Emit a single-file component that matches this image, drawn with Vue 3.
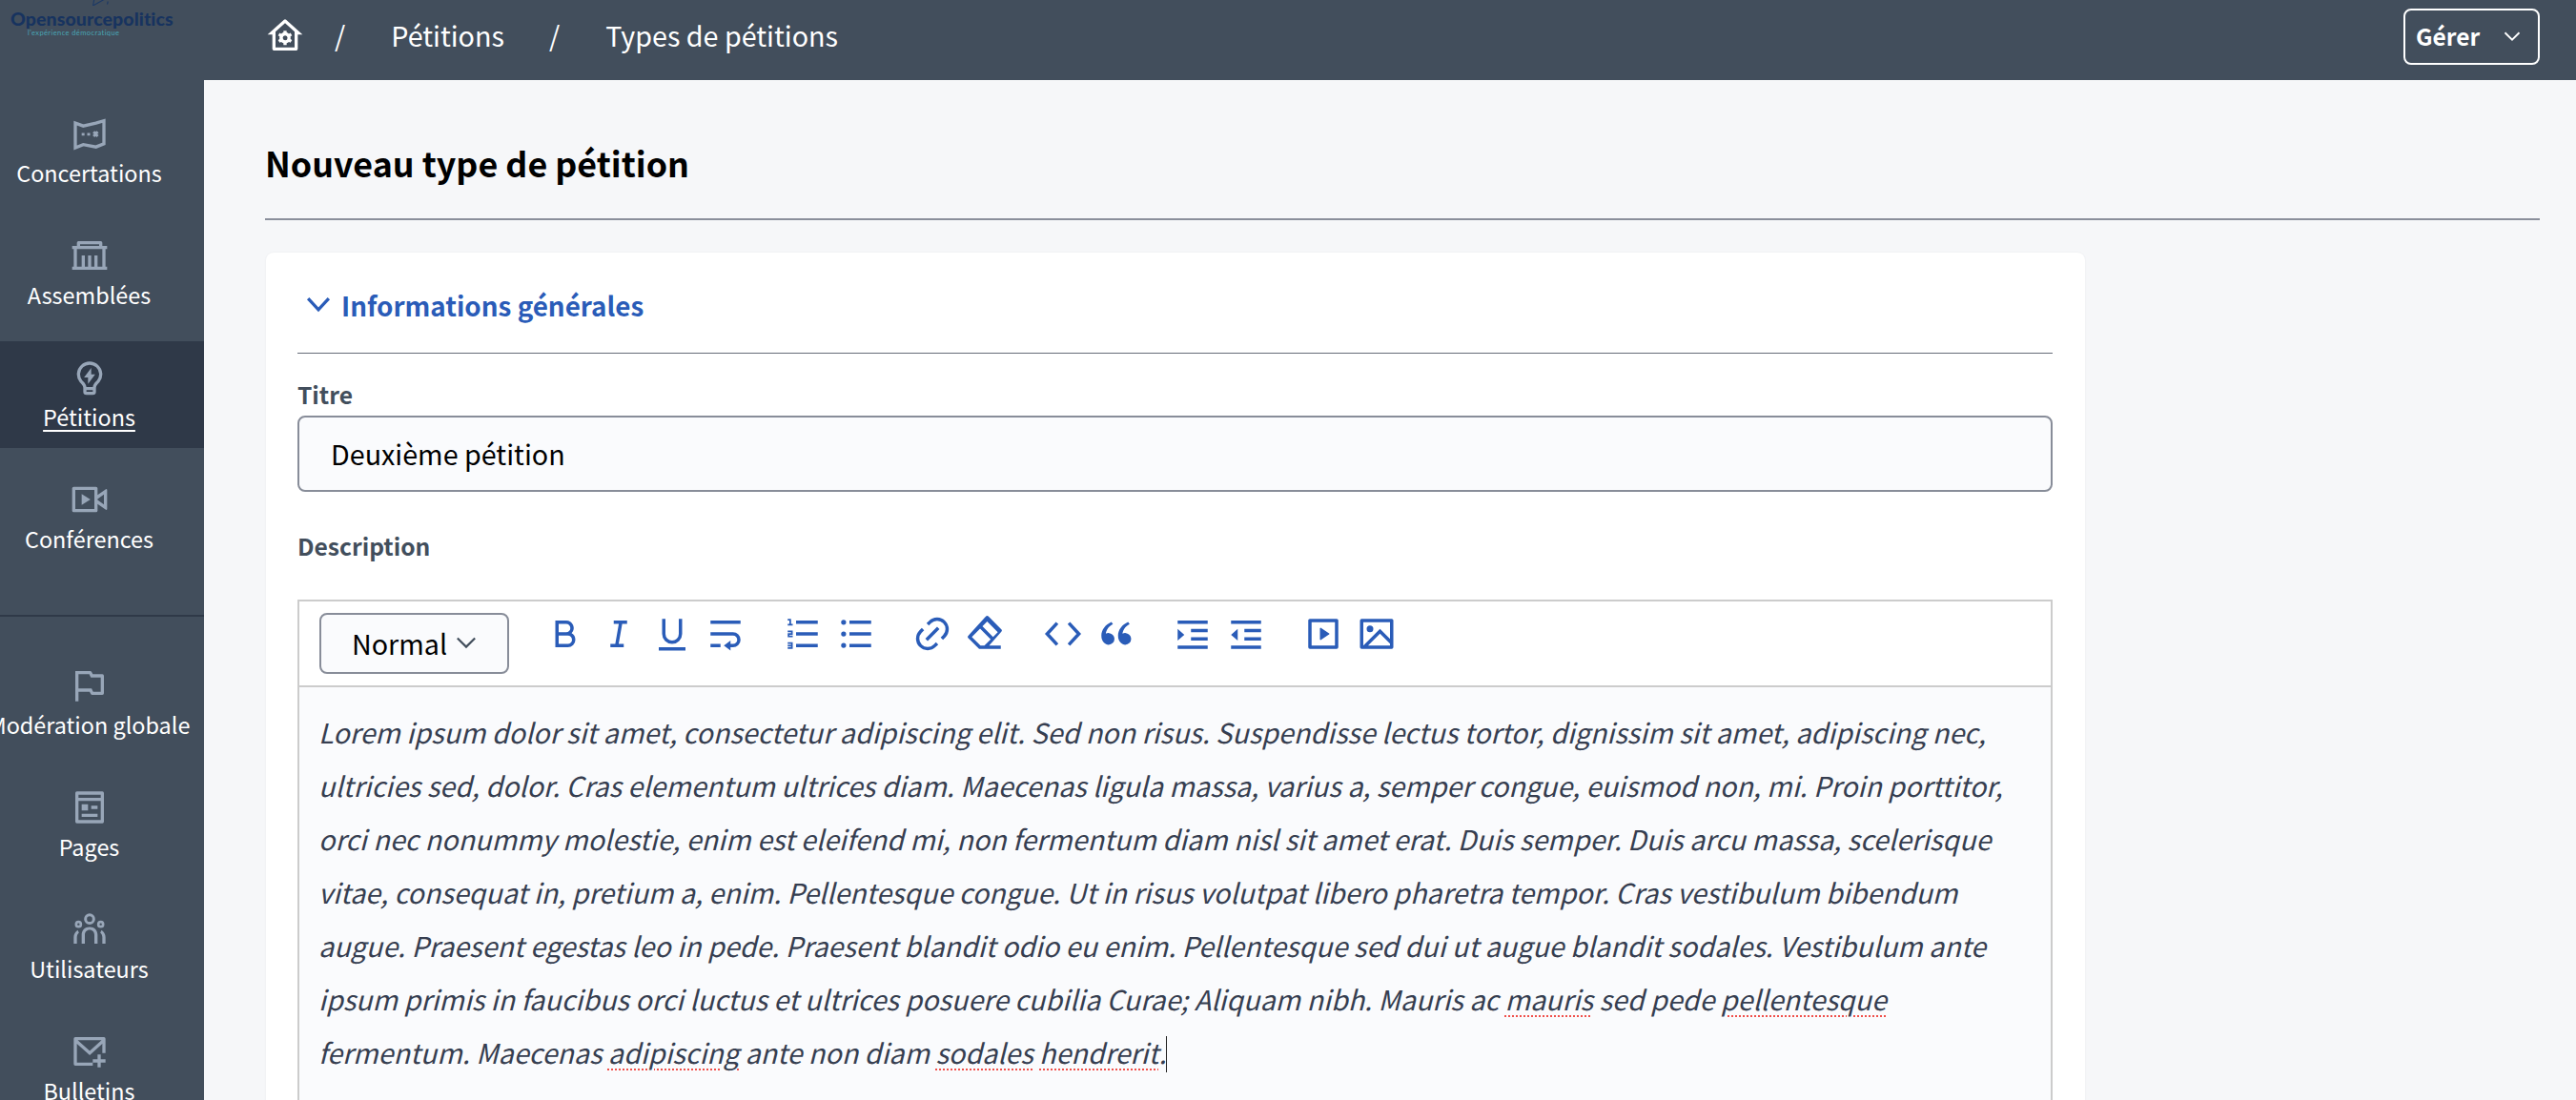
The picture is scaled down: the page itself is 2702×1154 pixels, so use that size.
<script setup>
const navTop = [
  { label: 'Concertations', paths: ['M3 5.500l5 1.800 8-1.800 5-1.500v14.500l-5 2-8-1.500-5 2z'], stroke: true, extra: 'M7 12.500h1.800M10.500 12.500h1.800M14.500 11l2.600 2.800M17.100 11l-2.600 2.800' },
  { label: 'Assemblées', paths: ['M20 6h3v2h-1v11h1v2H1v-2h1V8H1V6h3V4a1 1 0 0 1 1-1h14a1 1 0 0 1 1 1v2zm0 2H4v11h3v-7h2v7h2v-7h2v7h2v-7h2v7h3V8zM6 5v1h12V5H6z'] },
  { label: 'Pétitions', active: true, paths: ['M9.973 18h4.054c.132-1.202.745-2.194 1.740-3.277.113-.122.832-.867.917-.973a6 6 0 1 0-9.370-.002c.086.107.807.853.918.974.996 1.084 1.609 2.076 1.741 3.278zM14 20h-4v1h4v-1zm-8.246-5a8 8 0 1 1 12.490.002C17.624 15.774 16 17 16 18.500V21a2 2 0 0 1-2 2h-4a2 2 0 0 1-2-2v-2.500C8 17 6.375 15.774 5.754 15zM13 10.004h2.500l-4.500 6v-4H8.500L13 6v4.004z'] },
  { label: 'Conférences', paths: ['M17 9.200l5.213-3.650a.5.5 0 0 1 .787.41v12.080a.5.5 0 0 1-.787.41L17 14.800V19a1 1 0 0 1-1 1H2a1 1 0 0 1-1-1V5a1 1 0 0 1 1-1h14a1 1 0 0 1 1 1v4.200zm0 3.159l4 2.800V8.840l-4 2.800v.718zM3 6v12h12V6H3zm4 2.500l5.500 3.500L7 15.500z'] }
]
const navBottom = [
  { label: 'Modération globale', paths: ['M3 3h9.382a1 1 0 0 1 .894.553L14 5h6a1 1 0 0 1 1 1v11a1 1 0 0 1-1 1h-6.382a1 1 0 0 1-.894-.553L12 16H5v6H3V3zm2 2v9h8.236l1 2H19V7h-6.236l-1-2H5z'] },
  { label: 'Pages', paths: ['M5 8v12h14V8H5zm0-2h14V4H5v2zm15 16H4a1 1 0 0 1-1-1V3a1 1 0 0 1 1-1h16a1 1 0 0 1 1 1v18a1 1 0 0 1-1 1zM7 10h4v4H7v-4zm0 6h10v2H7v-2zm6-5h4v2h-4v-2z'] },
  { label: 'Utilisateurs', paths: ['M12 2a3.500 3.500 0 1 1 0 7 3.500 3.500 0 0 1 0-7zm0 1.800a1.700 1.700 0 1 0 0 3.400 1.700 1.700 0 0 0 0-3.400zM5 6.500a2.300 2.300 0 1 1 0 4.600 2.300 2.300 0 0 1 0-4.600zm0 1.600a.7.7 0 1 0 0 1.400.7.7 0 0 0 0-1.400zM19 6.500a2.300 2.300 0 1 1 0 4.600 2.300 2.300 0 0 1 0-4.600zm0 1.600a.7.7 0 1 0 0 1.400.7.7 0 0 0 0-1.400zM12 10.500c3 0 5 2 5 5V21h-2v-5.500c0-1.800-1.200-3.200-3-3.200s-3 1.400-3 3.200V21H7v-5.500c0-3 2-5 5-5zM4.500 12.500l.8 1.600C4.500 14.800 4 15.800 4 17v4H2v-4c0-2 1-3.500 2.500-4.500zM19.500 12.500C21 13.500 22 15 22 17v4h-2v-4c0-1.200-.5-2.200-1.300-2.900z'] },
  { label: 'Bulletins', paths: ['M22 13h-2V7.238l-7.928 7.100L4 7.216V19h10v2H3a1 1 0 0 1-1-1V4a1 1 0 0 1 1-1h18a1 1 0 0 1 1 1v9zM4.511 5l7.550 6.662L19.502 5H4.511zM19 17h3v2h-3v3h-2v-3h-3v-2h3v-3h2v3z'] }
]
const toolGroups = [
  [{ d: 'M8 11h4.500a2.500 2.500 0 1 0 0-5H8v5zm10 4.500a4.500 4.500 0 0 1-4.500 4.500H6V4h6.500a4.500 4.500 0 0 1 3.256 7.606A4.498 4.498 0 0 1 18 15.500zM8 13v5h5.500a2.500 2.500 0 1 0 0-5H8z' },
   { d: 'M15 20H7v-2h2.927l2.116-12H9V4h8v2h-2.927l-2.116 12H15z' },
   { d: 'M8 3v9a4 4 0 1 0 8 0V3h2v9a6 6 0 1 1-12 0V3h2zM4 20h16v2H4v-2z' },
   { d: 'M15 18h1.500a2.500 2.500 0 1 0 0-5H3v-2h13.500a4.500 4.500 0 1 1 0 9H15v2l-4-3 4-3v2zM3 4h18v2H3V4zm6 14v2H3v-2h6z' }],
  [{ d: 'M8 4h13v2H8V4zM5 3v3h1v1H3V6h1V4H3V3h2zM3 14v-2.500h2V11H3v-1h3v2.500H4v.5h2v1H3zm2 5.500H3v-1h2V18H3v-1h3v4H3v-1h2v-.5zM8 11h13v2H8v-2zm0 7h13v2H8v-2z' },
   { d: 'M8 4h13v2H8V4zM4.500 6.500a1.500 1.500 0 1 1 0-3 1.500 1.500 0 0 1 0 3zm0 7a1.500 1.500 0 1 1 0-3 1.500 1.500 0 0 1 0 3zm0 6.900a1.500 1.500 0 1 1 0-3 1.500 1.500 0 0 1 0 3zM8 11h13v2H8v-2zm0 7h13v2H8v-2z' }],
  [{ d: 'M18.364 15.536L16.950 14.120l1.414-1.414a5 5 0 1 0-7.071-7.071L9.879 7.050 8.464 5.636 9.880 4.222a7 7 0 0 1 9.900 9.900l-1.415 1.414zm-2.828 2.828l-1.415 1.414a7 7 0 0 1-9.900-9.900l1.415-1.414L7.050 9.880l-1.414 1.414a5 5 0 1 0 7.071 7.071l1.414-1.414 1.415 1.414zm-.708-10.607l1.415 1.415-7.071 7.070-1.415-1.414 7.071-7.070z' },
   { d: 'M8.586 8.858l-4.950 4.950 5.194 5.194H10V19h1.172l3.778-3.778-6.364-6.364zM10 7.444l6.364 6.364 2.828-2.829-6.364-6.364L10 7.444zM14 19h7v2h-9l-3.998.002-6.487-6.487a1 1 0 0 1 0-1.414L12.120 1.494a1 1 0 0 1 1.415 0l7.778 7.778a1 1 0 0 1 0 1.414L14 19z' }],
  [{ d: 'M8.500 5.500L2.500 12l6 6.500M15.500 5.500l6 6.500-6 6.500', line: true },
   { d: 'M4.583 17.321C3.553 16.227 3 15 3 13.011c0-3.500 2.457-6.637 6.030-8.188l.893 1.378c-3.335 1.804-3.987 4.145-4.247 5.621.537-.278 1.240-.375 1.929-.311 1.804.167 3.226 1.648 3.226 3.489a3.500 3.500 0 0 1-3.500 3.500c-1.073 0-2.099-.49-2.748-1.179zm10 0C13.553 16.227 13 15 13 13.011c0-3.500 2.457-6.637 6.030-8.188l.893 1.378c-3.335 1.804-3.987 4.145-4.247 5.621.537-.278 1.240-.375 1.929-.311 1.804.167 3.226 1.648 3.226 3.489a3.500 3.500 0 0 1-3.500 3.500c-1.073 0-2.099-.49-2.748-1.179z' }],
  [{ d: 'M3 4h18v2H3V4zm0 15h18v2H3v-2zm8-5h10v2H11v-2zm0-5h10v2H11V9zm-4 3.500L3 16V9l4 3.500z' },
   { d: 'M3 4h18v2H3V4zm0 15h18v2H3v-2zm8-5h10v2H11v-2zm0-5h10v2H11V9zm-8 3.500L7 9v7l-4-3.500z' }],
  [{ d: 'M3 3.993C3 3.445 3.445 3 3.993 3h16.014c.548 0 .993.445.993.993v16.014a.994.994 0 0 1-.993.993H3.993A.994.994 0 0 1 3 20.007V3.993zM5 5v14h14V5H5zm5.622 3.415l4.879 3.252a.4.4 0 0 1 0 .666l-4.880 3.252a.4.4 0 0 1-.621-.332V8.747a.4.4 0 0 1 .622-.332z' },
   { d: 'M4.828 21l-.02.02-.021-.02H2.992A.993.993 0 0 1 2 20.007V3.993A1 1 0 0 1 2.992 3h18.016c.548 0 .992.445.992.993v16.014a1 1 0 0 1-.992.993H4.828zM20 15V5H4v14L14 9l6 6zm0 2.828l-6-6L6.828 19H20v-1.172zM8 11a2 2 0 1 1 0-4 2 2 0 0 1 0 4z' }]
]
</script>

<template>
  <div class="page">
    <header class="topbar">
      <div class="logo">
        <svg class="logo-mark" viewBox="0 0 24 8" fill="none" stroke="#1d3a66" stroke-width="1.500"><path d="M2 8L4 -2l14 1z" /><path d="M22 6l1-4" /></svg>
        <div class="logo-name">Opensourcepolitics</div>
        <div class="logo-tag">l'expérience démocratique</div>
      </div>
      <nav class="crumbs">
        <svg class="home" viewBox="0 0 24 24" fill="#fff"><path d="M19 21H5a1 1 0 0 1-1-1v-9H1l10.327-9.388a1 1 0 0 1 1.346 0L23 11h-3v9a1 1 0 0 1-1 1zM6 19h12V9.157l-6-5.454-6 5.454V19zm2.591-5.191a3.508 3.508 0 0 1 0-1.622l-.991-.572 1-1.732.991.573a3.495 3.495 0 0 1 1.404-.812V8.500h2v1.144c.532.158 1.010.44 1.403.812l.992-.573 1 1.731-.991.573a3.508 3.508 0 0 1 0 1.622l.991.572-1 1.731-.991-.572a3.495 3.495 0 0 1-1.404.811v1.145h-2V16.350a3.495 3.495 0 0 1-1.404-.811l-.991.572-1-1.730.991-.573zm3.404.688a1.500 1.500 0 1 0 0-2.998 1.500 1.500 0 0 0 0 2.998z" /></svg>
        <span class="sep first">/</span>
        <span>Pétitions</span>
        <span class="sep">/</span>
        <span>Types de pétitions</span>
      </nav>
      <button class="manage">
        <span>Gérer</span>
        <svg viewBox="0 0 24 24" fill="none" stroke="#fff" stroke-width="2.200"><path d="M3 7.500l9 9 9-9" /></svg>
      </button>
    </header>

    <div class="body">
      <aside class="side">
        <div class="side-group first">
          <a v-for="item in navTop" :key="item.label" class="nav" :class="{ active: item.active }">
            <svg v-if="item.stroke" viewBox="0 0 24 24" fill="none" stroke="#98a6b8" stroke-width="2">
              <path v-for="p in item.paths" :key="p" :d="p" />
              <path :d="item.extra" stroke-width="1.700" />
            </svg>
            <svg v-else viewBox="0 0 24 24" fill="#98a6b8"><path v-for="p in item.paths" :key="p" :d="p" /></svg>
            <span class="nav-label">{{ item.label }}</span>
          </a>
        </div>
        <div class="side-group second">
          <a v-for="item in navBottom" :key="item.label" class="nav">
            <svg viewBox="0 0 24 24" fill="#98a6b8"><path v-for="p in item.paths" :key="p" :d="p" /></svg>
            <span class="nav-label">{{ item.label }}</span>
          </a>
        </div>
      </aside>

      <main class="main">
        <h1 class="title">Nouveau type de pétition</h1>
        <section class="card">
          <h2 class="section">
            <svg viewBox="0 0 24 24" fill="none" stroke="#2a5cb8" stroke-width="3"><path d="M2 6.500l10 11 10-11" /></svg>
            <span>Informations générales</span>
          </h2>
          <label class="label">Titre</label>
          <div class="input">Deuxième pétition</div>
          <label class="label desc">Description</label>
          <div class="editor">
            <div class="toolbar">
              <div class="select">
                <span>Normal</span>
                <svg viewBox="0 0 24 24" fill="none" stroke="#424e5c" stroke-width="2.400"><path d="M2 7l10 10 10-10" /></svg>
              </div>
              <div v-for="(group, i) in toolGroups" :key="i" class="tool-group">
                <svg v-for="t in group" :key="t.d" class="tool" viewBox="0 0 24 24">
                  <path v-if="t.line" :d="t.d" fill="none" stroke="#2a5cb8" stroke-width="2" />
                  <path v-else :d="t.d" fill="#2a5cb8" />
                </svg>
              </div>
            </div>
            <div class="text">
              <span class="line">Lorem ipsum dolor sit amet, consectetur adipiscing elit. Sed non risus. Suspendisse lectus tortor, dignissim sit amet, adipiscing nec,</span>
              <span class="line">ultricies sed, dolor. Cras elementum ultrices diam. Maecenas ligula massa, varius a, semper congue, euismod non, mi. Proin porttitor,</span>
              <span class="line">orci nec nonummy molestie, enim est eleifend mi, non fermentum diam nisl sit amet erat. Duis semper. Duis arcu massa, scelerisque</span>
              <span class="line">vitae, consequat in, pretium a, enim. Pellentesque congue. Ut in risus volutpat libero pharetra tempor. Cras vestibulum bibendum</span>
              <span class="line">augue. Praesent egestas leo in pede. Praesent blandit odio eu enim. Pellentesque sed dui ut augue blandit sodales. Vestibulum ante</span>
              <span class="line">ipsum primis in faucibus orci luctus et ultrices posuere cubilia Curae; Aliquam nibh. Mauris ac <span class="spell">mauris</span> sed pede <span class="spell">pellentesque</span></span>
              <span class="line">fermentum. Maecenas <span class="spell">adipiscing</span> ante non diam <span class="spell">sodales</span> <span class="spell">hendrerit</span>.<span class="caret"></span></span>
            </div>
          </div>
        </section>
      </main>
    </div>
  </div>
</template>

<style>
html, body { margin: 0; height: 100%; overflow: hidden; background: #f6f7f9; }
</style>

<style scoped>
.page {
  width: 2702px;
  height: 1154px;
  overflow: hidden;
  display: flex;
  flex-direction: column;
  font-family: "Noto Sans CJK SC", "Noto Sans", sans-serif;
  color: #000;
}
.topbar {
  flex: 0 0 84px;
  height: 84px;
  background: #424e5c;
  display: flex;
  align-items: center;
  color: #fff;
  padding-right: 38px;
  box-sizing: border-box;
}
.logo {
  flex: 0 0 214px;
  height: 84px;
  padding: 0 0 0 11px;
  box-sizing: border-box;
  display: flex;
  flex-direction: column;
  position: relative;
}
.logo-mark {
  position: absolute;
  left: 90px;
  top: 0;
  width: 30px;
  height: 6px;
}
.logo-name {
  margin-top: 8px;
  font: 900 19.500px/24px "Lato", sans-serif;
  color: #17335f;
  letter-spacing: 0.100px;
}
.logo-tag {
  font: 400 7.500px/10px "Lato", sans-serif;
  color: #49a4b4;
  padding-left: 18px;
  margin-top: -2px;
  letter-spacing: 0.400px;
}
.crumbs {
  display: flex;
  align-items: center;
  flex: 1;
  font-size: 28.700px;
  line-height: 40px;
  padding-left: 65px;
  margin-top: -11px;
  height: 40px;
}
.home { width: 40px; height: 40px; margin-top: 3px; }
.sep { padding: 0 48px 0 47px; }
.sep.first { padding-left: 32px; }
.manage {
  display: flex;
  align-items: center;
  justify-content: space-between;
  width: 143px;
  height: 59px;
  margin-top: -8px;
  padding: 0 17px 0 11px;
  background: transparent;
  border: 2px solid #fff;
  border-radius: 8px;
  color: #fff;
  font: 700 24.500px/36px "Noto Sans CJK SC", sans-serif;
  box-sizing: border-box;
}
.manage svg { width: 20px; height: 20px; }
.body { flex: 1; display: flex; min-height: 0; }
.side {
  flex: 0 0 214px;
  width: 214px;
  background: #424e5c;
  overflow: hidden;
}
.side-group { display: flex; flex-direction: column; gap: 16px; }
.side-group.first { padding: 18px 0 40px; border-bottom: 2px solid #2f3948; height: 563px; box-sizing: border-box; }
.side-group.second { padding-top: 34px; }
.nav {
  height: 112px;
  box-sizing: border-box;
  padding-right: 27px;
  display: flex;
  flex-direction: column;
  align-items: center;
  justify-content: center;
  gap: 5px;
  color: #fff;
  white-space: nowrap;
}
.nav svg { width: 40px; height: 40px; flex: none; }
.nav-label { font-size: 23.400px; line-height: 32px; }
.nav.active { background: #2f3948; }
.nav.active .nav-label { text-decoration: underline; text-underline-offset: 4px; }
.main {
  flex: 1;
  padding: 0 38px 0 64px;
  min-width: 0;
  background: #f6f7f9;
}
.title {
  margin: 0;
  padding: 57px 0 0 0;
  height: 147px;
  box-sizing: border-box;
  font-size: 35.800px;
  line-height: 58px;
  font-weight: 700;
  border-bottom: 2px solid #8a8f9b;
}
.card {
  margin-top: 34px;
  width: 1908px;
  margin-left: 1px;
  background: #fff;
  border-radius: 8px;
  padding: 0 34px 0 33px;
  box-sizing: border-box;
  box-shadow: 0 0 2px rgba(60, 70, 90, 0.08);
}
.section {
  display: flex;
  align-items: center;
  gap: 11px;
  margin: 0;
  height: 106px;
  padding-left: 9px;
  padding-top: 4px;
  box-sizing: border-box;
  color: #2a5cb8;
  font-size: 27.800px;
  font-weight: 600;
  border-bottom: 1px solid #666c78;
}
.section svg { width: 26px; height: 26px; margin-top: -2px; }
.label {
  display: block;
  color: #424e5c;
  font-size: 24.600px;
  line-height: 36px;
  font-weight: 600;
  margin-top: 24px;
}
.label.desc { margin-top: 38px; }
.input {
  margin-top: 5px;
  height: 80px;
  line-height: 76px;
  padding-left: 33px;
  box-sizing: border-box;
  font-size: 28.700px;
  background: #fafbfd;
  border: 2px solid #888d99;
  border-radius: 8px;
  color: #000;
}
.editor {
  margin-top: 39px;
  border: 2px solid #ccc;
  border-bottom: 0;
}
.toolbar {
  height: 90px;
  box-sizing: border-box;
  display: flex;
  align-items: flex-start;
  padding-left: 21px;
  border-bottom: 2px solid #ccc;
  background: #fff;
}
.select {
  width: 199px;
  height: 64px;
  margin-top: 12px;
  margin-right: 31px;
  padding-bottom: 2px;
  box-sizing: border-box;
  border: 2px solid #888d99;
  border-radius: 8px;
  background: #fafbfd;
  display: flex;
  align-items: center;
  justify-content: center;
  gap: 9px;
  font-size: 28.700px;
}
.select svg { width: 22px; height: 22px; }
.tool-group { display: flex; margin-right: 24.500px; }
.tool { width: 42px; height: 42px; padding: 13px 7px 0; flex: none; }
.text {
  background: #fafbfd;
  padding: 19px 0 60px 20px;
  font-size: 28.700px;
  line-height: 56px;
  font-style: italic;
  color: #363e50;
  white-space: nowrap;
}
.line { display: block; }
.spell { text-decoration: underline dotted #f0504a 2px; text-underline-offset: 5px; }
.caret {
  display: inline-block;
  width: 1px;
  height: 38px;
  background: #222;
  vertical-align: -9px;
}
</style>
